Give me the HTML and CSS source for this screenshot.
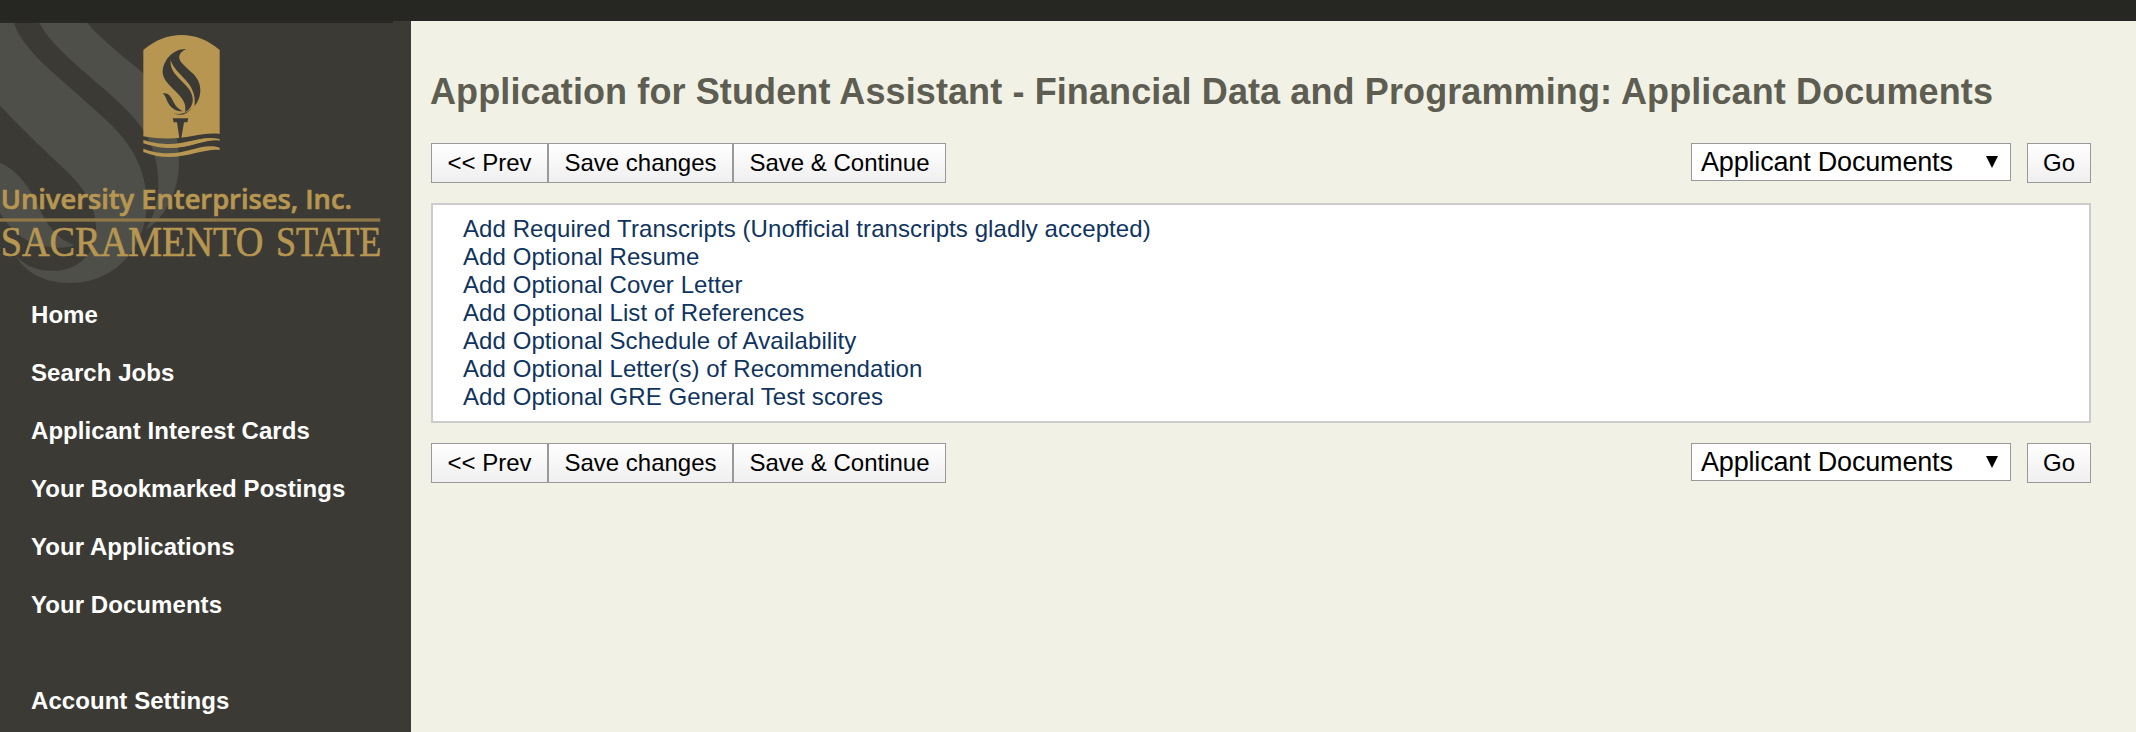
FILE: index.html
```html
<!DOCTYPE html>
<html lang="en">
<head>
<meta charset="utf-8">
<title>Applicant Documents</title>
<link rel="stylesheet" href="styles.css">
</head>
<body>
<div class="page">
  <aside class="sidebar">
    <svg class="logo" viewBox="0 0 1233 831" role="img" aria-label="University Enterprises, Inc. Sacramento State">
      <g transform="translate(0 -69)">
        <g fill="#4f4f49">
          <path d="M0 69H42C55 112 95 160 150 210C200 255 270 315 320 362C395 430 440 510 440 610C440 735 350 849 210 849C130 849 75 815 48 768C85 808 130 814 175 812C245 805 290 750 288 680C285 600 235 545 175 490C120 438 55 375 0 317Z"/>
          <path d="M118 69H262C300 115 370 170 428 218C500 280 537 370 537 490C535 560 510 640 438 690C465 640 475 600 475 550C475 470 450 395 370 320C325 275 270 232 215 182C175 145 140 110 118 69Z"/>
          <path d="M0 488C60 515 95 570 125 640C150 690 180 720 222 735C190 750 120 745 70 715C40 695 20 670 0 640Z"/>
        </g>
        <path fill="#b69651" d="M430 150C500 90 590 90 659 150V402C600 393 545 430 430 409Z"/>
        <g fill="#b69651">
          <path d="M430 420C550 455 580 402 659 417V422C590 412 550 470 430 430Z"/>
          <path d="M430 424C545 456 590 400 659 420C590 417 545 470 430 424Z"/>
          <path d="M430 446C545 487 590 423 659 443V450C600 443 530 496 430 456Z"/>
        </g>
        <g fill="#3c3a35">
          <path d="M558 147C520 146 488 180 488 218C492 262 568 286 555 336C578 325 588 296 566 266C545 238 508 218 512 180C526 228 592 244 584 318C608 288 608 246 576 218C552 194 514 172 558 147Z"/>
          <path d="M488 280C522 276 512 318 548 333C530 337 512 324 503 306C497 294 496 286 488 280Z"/>
          <path d="M518 338Q548 350 576 324Q550 356 518 338Z"/>
          <path d="M518 355H565L562 367H552L544 414H538L531 367H521Z"/>
        </g>
        <text class="logo-name" x="2" y="627" textLength="1054" lengthAdjust="spacingAndGlyphs">University Enterprises, Inc.</text>
        <rect x="0" y="655" width="1141" height="10" fill="#8f7747"/>
        <text class="logo-school" x="2" y="768" textLength="788" lengthAdjust="spacingAndGlyphs">SACRAMENTO</text>
        <text class="logo-school" x="828" y="768" textLength="316" lengthAdjust="spacingAndGlyphs">STATE</text>
      </g>
    </svg>
    <nav class="nav">
      <a>Home</a>
      <a>Search Jobs</a>
      <a>Applicant Interest Cards</a>
      <a>Your Bookmarked Postings</a>
      <a>Your Applications</a>
      <a>Your Documents</a>
      <a class="nav-account">Account Settings</a>
    </nav>
  </aside>
  <main class="main">
    <h1 class="title"><span>Application for Student Assistant - Financial Data and Programming: Applicant Documents</span></h1>
    <div class="toolbar">
      <div class="steps"><button class="btn prev">&lt;&lt; Prev</button><button class="btn save">Save changes</button><button class="btn next">Save &amp; Continue</button></div>
      <div class="jump">
        <div class="select"><span>Applicant Documents</span><svg class="arrow" viewBox="0 0 12 12"><path d="M0 0H12L6 12Z"/></svg></div>
        <button class="btn go">Go</button>
      </div>
    </div>
    <ul class="documents">
      <li><a>Add Required Transcripts (Unofficial transcripts gladly accepted)</a></li>
      <li><a>Add Optional Resume</a></li>
      <li><a>Add Optional Cover Letter</a></li>
      <li><a>Add Optional List of References</a></li>
      <li><a>Add Optional Schedule of Availability</a></li>
      <li><a>Add Optional Letter(s) of Recommendation</a></li>
      <li><a>Add Optional GRE General Test scores</a></li>
    </ul>
    <div class="toolbar">
      <div class="steps"><button class="btn prev">&lt;&lt; Prev</button><button class="btn save">Save changes</button><button class="btn next">Save &amp; Continue</button></div>
      <div class="jump">
        <div class="select"><span>Applicant Documents</span><svg class="arrow" viewBox="0 0 12 12"><path d="M0 0H12L6 12Z"/></svg></div>
        <button class="btn go">Go</button>
      </div>
    </div>
  </main>
</div>
</body>
</html>
```
FILE: styles.css
```css
* { box-sizing: border-box; }
body {
  margin: 0;
  background: #f1f1e5;
  font-family: "Liberation Sans", Arial, sans-serif;
  overflow: hidden;
}
.page {
  display: grid;
  grid-template-columns: 411px 1fr;
  height: 732px;
  border-top: 21px solid #262622;
}
.sidebar {
  background: #3c3a35;
}
.sidebar::before {
  content: "";
  display: block;
  width: 393px;
  height: 2px;
  background: #292824;
}
.logo {
  display: block;
  width: 411px;
  height: 277px;
}
.logo-name {
  font: 600 80px "Open Sans", "Noto Sans", sans-serif;
  fill: #b69651;
  stroke: #b69651;
  stroke-width: 2px;
}
.logo-school {
  font: 128px "Liberation Serif", serif;
  fill: #b69651;
  stroke: #b69651;
  stroke-width: 2px;
}
.nav {
  display: flex;
  flex-direction: column;
  padding: 1px 0 0 31px;
}
.nav a {
  height: 58px;
  line-height: 28px;
  color: #fff;
  font-size: 24px;
  font-weight: bold;
  letter-spacing: 0.06px;
}
.nav .nav-account { margin-top: 38px; }
.main { padding: 50px 45px 0 20px; }
.title {
  margin: 0 0 30px;
  height: 42px;
  line-height: 42px;
  font-size: 36px;
  letter-spacing: 0.11px;
  color: #5e5d52;
  white-space: nowrap;
}
.title span { margin-left: -1px; }
.toolbar, .jump, .steps { display: flex; }
.toolbar { justify-content: space-between; height: 40px; }
.btn {
  height: 40px;
  padding: 0;
  border: 1px solid #999;
  background: linear-gradient(#fff, #efeff0);
  color: #000;
  font: 24px "Liberation Sans", Arial, sans-serif;
}
.prev { width: 117px; }
.save { width: 185px; }
.next { width: 213px; }
.go { width: 64px; }
.jump { gap: 16px; }
.select {
  display: flex;
  justify-content: space-between;
  width: 320px;
  height: 38px;
  padding: 0 12px 0 9px;
  border: 1px solid #999;
  background: #fff;
  font-size: 27px;
  letter-spacing: -0.18px;
  line-height: 37px;
}
.arrow { width: 12px; height: 12px; margin-top: 12px; }
.documents {
  list-style: none;
  height: 220px;
  margin: 20px 0;
  padding: 10px 30px;
  border: 2px solid #ccc;
  background: #fff;
  color: #0f3460;
  font-size: 24px;
  letter-spacing: 0.08px;
  line-height: 28px;
}
```
